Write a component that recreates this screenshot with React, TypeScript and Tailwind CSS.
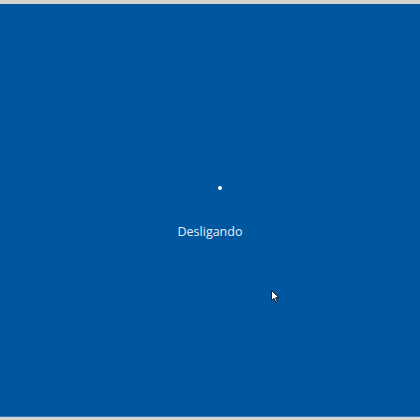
import React from "react";

const Cursor: React.FC = () => (
  <svg width="9" height="13" viewBox="0 0 9 13" className="absolute left-[271px] top-[290px]">
    <path
      d="M0.5 0.5 L0.5 10.5 L3 8.2 L4.8 12.3 L6.3 11.6 L4.6 7.7 L8 7.7 Z"
      fill="#ffffff"
      stroke="#0a1a33"
      strokeWidth="1"
      strokeLinejoin="round"
    />
  </svg>
);

const App: React.FC = () => {
  return (
    <div className="relative w-[420px] h-[420px] flex flex-col bg-[#d6d3ce] overflow-hidden">
      {/* top window edge */}
      <div className="h-[4px] bg-[#d6d3ce]" />
      {/* shutdown screen */}
      <div className="flex-1 bg-[#0057a0] flex flex-col">
        <div className="pt-[182px] pl-[218px]">
          <div className="w-[4px] h-[4px] rounded-full bg-white" />
        </div>
        <div className="mt-[34px] flex justify-center">
          <span
            className="text-[12.5px] leading-[16px] text-[#e6eef7]"
            style={{ fontFamily: '"Open Sans", "Noto Sans", sans-serif' }}
          >
            Desligando
          </span>
        </div>
      </div>
      <div className="h-[1px] bg-[#2f77b6]" />
      <div className="h-[3px] bg-[#d6d3ce]" />
      <Cursor />
    </div>
  );
};

export default App;
